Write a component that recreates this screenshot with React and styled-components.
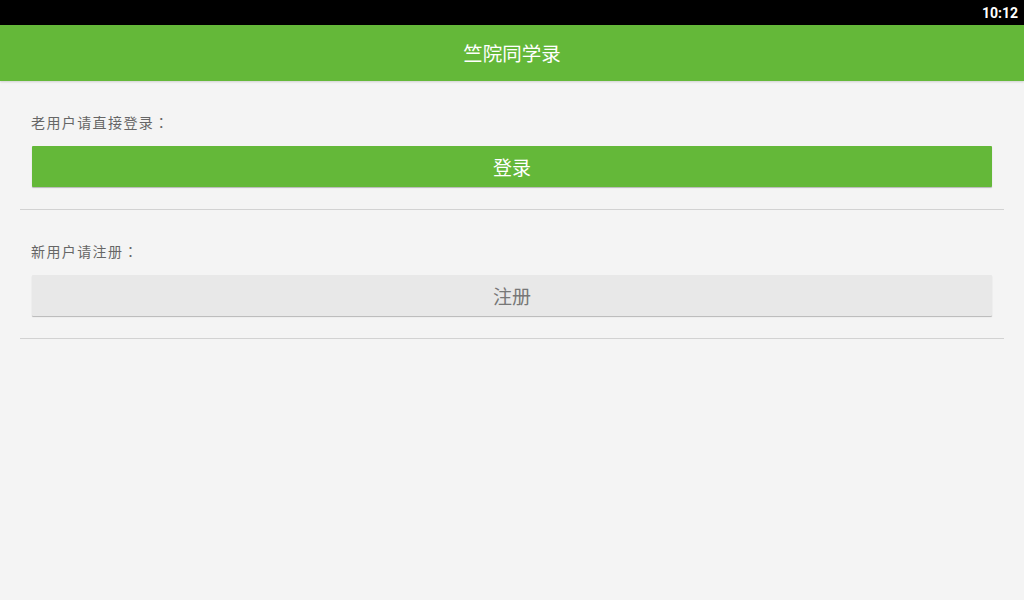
import styled, { createGlobalStyle } from 'styled-components';

export default function App() {
  return (
    <>
      <GlobalStyle />
      <Screen>
        <StatusBar>
          <Clock>10:12</Clock>
        </StatusBar>
        <TitleBar>竺院同学录</TitleBar>
        <Content>
          <Section>
            <Label>老用户请直接登录：</Label>
            <ActionButton $primary>登录</ActionButton>
          </Section>
          <Divider />
          <Section>
            <Label>新用户请注册：</Label>
            <ActionButton>注册</ActionButton>
          </Section>
          <Divider />
        </Content>
      </Screen>
    </>
  );
}

const GlobalStyle = createGlobalStyle`
  html, body {
    margin: 0;
    padding: 0;
    background: #f4f4f4;
    font-family: Roboto, "Noto Sans CJK SC", sans-serif;
  }
`;

const Screen = styled.div`
  width: 1024px;
  height: 600px;
  display: flex;
  flex-direction: column;
  background: #f4f4f4;
  overflow: hidden;
`;

const StatusBar = styled.div`
  height: 25px;
  background: #000;
  display: flex;
  align-items: center;
  justify-content: flex-end;
  padding-right: 6px;
`;

const Clock = styled.span`
  color: #fff;
  font-family: Roboto, sans-serif;
  font-weight: 700;
  font-size: 14px;
`;

const TitleBar = styled.div`
  height: 56px;
  padding-bottom: 2px;
  box-sizing: border-box;
  background: #64b839;
  color: #fff;
  font-size: 19.5px;
  display: flex;
  align-items: center;
  justify-content: center;
  box-shadow: 0 1px 2px rgba(0, 0, 0, 0.15);
  position: relative;
  z-index: 1;
`;

const Content = styled.div`
  padding: 0 20px;
`;

const Section = styled.div`
  padding: 31px 12px 22px;
  display: flex;
  flex-direction: column;
`;

const Label = styled.div`
  font-family: "Noto Sans CJK TC", sans-serif;
  font-size: 14px;
  line-height: 20px;
  color: #666;
  letter-spacing: 1.4px;
  margin-left: -1px;
  margin-bottom: 14px;
`;

const ActionButton = styled.div`
  height: 41px;
  padding-bottom: 1px;
  box-sizing: border-box;
  display: flex;
  align-items: center;
  justify-content: center;
  font-size: 19px;
  border-radius: 1px;
  background: ${p => (p.$primary ? '#64b839' : '#e8e8e8')};
  color: ${p => (p.$primary ? '#fff' : '#777')};
  box-shadow: 0 1px 1px rgba(0, 0, 0, 0.25);
`;

const Divider = styled.div`
  height: 1px;
  background: #d2d2d2;
`;
